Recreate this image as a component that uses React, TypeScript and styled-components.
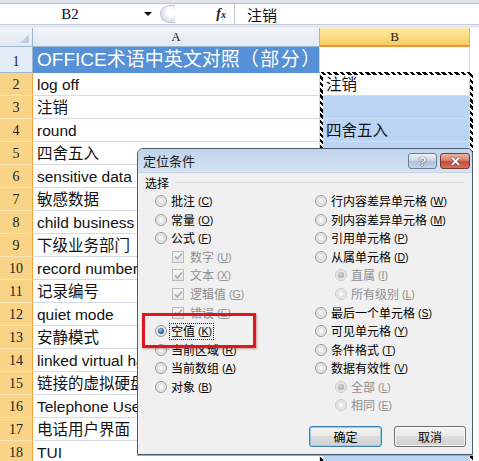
import React from "react";
import styled, { createGlobalStyle, css } from "styled-components";

const GlobalStyle = createGlobalStyle`
  html, body { margin: 0; padding: 0; background: #ffffff; }
  body { font-family: "Liberation Sans", "Noto Sans CJK SC", sans-serif; }
  #root { width: 479px; height: 461px; }
`;

const Page = styled.div`
  position: relative;
  width: 479px;
  height: 461px;
  overflow: hidden;
  background: #fff;
  display: flex;
  flex-direction: column;
`;

/* ---------- formula bar ---------- */
const FormulaBar = styled.div`
  flex: none;
  height: 28px;
  box-sizing: border-box;
  border-top: 3px solid #dfe4eb;
  padding-bottom: 3px;
  background: #e6ecf4;
  display: flex;
`;

const BarInner = styled.div`
  flex: 1;
  display: flex;
  align-items: center;
  background: #fff;
  border-top: 1px solid #b6c1cf;
  border-bottom: 1px solid #c3ccd8;
`;

const NameBox = styled.div`
  width: 158px;
  height: 100%;
  display: flex;
  align-items: center;
  font-family: "Liberation Serif", serif;
  font-size: 15px;
  color: #111;
`;

const NameText = styled.span`
  width: 140px;
  text-align: center;
`;

const DropArrow = styled.span`
  width: 0;
  height: 0;
  border-left: 4px solid transparent;
  border-right: 4px solid transparent;
  border-top: 4px solid #111;
  margin-left: 4px;
`;

const Grip = styled.div`
  width: 15px;
  height: 18px;
  margin-left: 2px;
  box-sizing: border-box;
  border-radius: 9px 0 0 9px;
  border: 1px solid #b9c5d3;
  border-right: none;
  background: radial-gradient(circle at 70% 40%, #ffffff 0 25%, #dfe6ee 60%, #c9d3df 100%);
`;

const Fx = styled.div`
  width: 60px;
  height: 100%;
  display: flex;
  align-items: center;
  justify-content: flex-end;
  padding-right: 8px;
  box-sizing: border-box;
  border-right: 1px solid #c3ccd8;
  font-family: "Liberation Serif", serif;
  font-style: italic;
  font-weight: bold;
  font-size: 14px;
  color: #222;
  sub { font-size: 10px; vertical-align: -1px; }
`;

const FormulaText = styled.div`
  padding-left: 12px;
  font-family: "Noto Sans CJK SC", sans-serif;
  font-size: 15px;
  color: #111;
`;

/* ---------- sheet ---------- */
const Sheet = styled.div`
  flex: 1;
  display: grid;
  grid-template-columns: 33px 287px 150px 9px;
  grid-template-rows: 19px 26px;
  grid-auto-rows: 23px;
`;

const Corner = styled.div`
  position: relative;
  box-sizing: border-box;
  background: linear-gradient(#f1f5fa, #e1e9f3);
  border-right: 1px solid #9eb6ce;
  border-bottom: 1px solid #9eb6ce;
  &::after {
    content: "";
    position: absolute;
    right: 3px;
    bottom: 3px;
    border-left: 9px solid transparent;
    border-bottom: 9px solid #c3cdd9;
  }
`;

const ColHead = styled.div<{ $sel?: boolean; $blank?: boolean }>`
  box-sizing: border-box;
  display: flex;
  align-items: center;
  justify-content: center;
  font-family: "Liberation Serif", serif;
  font-size: 13px;
  color: #222;
  border-right: 1px solid #9eb6ce;
  border-bottom: 1px solid #9eb6ce;
  background: linear-gradient(#f4f7fb, #e0e8f2);
  ${(p) =>
    p.$sel &&
    css`
      background: linear-gradient(#fdeaa6, #f7cd63);
      border-bottom: 2px solid #f29436;
      border-right: 1px solid #e2b35b;
    `}
  ${(p) =>
    p.$blank &&
    css`
      background: #fff;
      border-right: none;
      border-bottom: none;
    `}
`;

const RowHead = styled.div<{ $sel?: boolean }>`
  box-sizing: border-box;
  display: flex;
  align-items: flex-end;
  justify-content: center;
  padding-bottom: 1px;
  font-family: "Liberation Serif", serif;
  font-size: 14px;
  line-height: 18px;
  color: #222;
  background: ${(p) => (p.$sel ? "#f9d487" : "#e4ecf7")};
  border-bottom: 1px solid ${(p) => (p.$sel ? "#fbe6b6" : "#9eb6ce")};
  border-right: 1px solid ${(p) => (p.$sel ? "#efa33a" : "#9eb6ce")};
`;

const Cell = styled.div<{ $tone?: "title" | "range" | "active" }>`
  box-sizing: border-box;
  display: flex;
  align-items: flex-end;
  padding: 0 0 1px 4px;
  overflow: hidden;
  white-space: nowrap;
  font-family: "Liberation Sans", "Noto Sans CJK SC", sans-serif;
  font-size: 15.5px;
  line-height: 19px;
  color: #111;
  background: #fff;
  border-right: 1px solid #d4dbe6;
  border-bottom: 1px solid #d4dbe6;
  ${(p) =>
    p.$tone === "title" &&
    css`
      background: #5690d6;
      color: #fff;
      font-size: 19px;
      line-height: 24px;
      padding-bottom: 0;
      border-bottom-color: #5690d6;
    `}
  ${(p) =>
    p.$tone === "range" &&
    css`
      background: #bad5f4;
      border-bottom-color: #cfe0f6;
      padding-left: 6px;
    `}
  ${(p) =>
    p.$tone === "active" &&
    css`
      padding-left: 6px;
    `}
`;

const TitleText = styled.span`
  display: inline-block;
`;

const Paren = styled.span`
  letter-spacing: 1.5px;
`;

const Filler = styled.div`
  background: #fff;
`;

const Marquee = styled.div`
  position: absolute;
  left: 320px;
  top: 72px;
  width: 153px;
  height: 420px;
  box-sizing: border-box;
  border: 3px solid transparent;
  border-image: repeating-linear-gradient(45deg, #000 0 2.5px, #fff 2.5px 4.5px) 3;
  pointer-events: none;
`;

/* ---------- dialog ---------- */
const Dialog = styled.div`
  position: absolute;
  left: 137px;
  top: 148px;
  width: 336px;
  height: 307px;
  box-sizing: border-box;
  border: 1px solid #4e5d70;
  border-radius: 6px 6px 0 0;
  background: #f0f0f0;
  box-shadow: 0 1px 0 #7fb1db;
  display: flex;
  flex-direction: column;
  font-family: "Noto Sans CJK SC", "Liberation Sans", sans-serif;
  font-size: 12px;
  color: #000;
`;

const TitleBar = styled.div`
  flex: none;
  height: 24px;
  box-sizing: border-box;
  display: flex;
  align-items: flex-start;
  padding: 0 2px 0 5px;
  border-radius: 5px 5px 0 0;
  background: linear-gradient(#bfd3eb, #d6e3f2);
  border-bottom: 1px solid #c7d4e3;
`;

const Title = styled.span`
  font-size: 13px;
  line-height: 24px;
  color: #1b1b1b;
`;

const TitleButtons = styled.div`
  margin-left: auto;
  margin-top: 4px;
  display: flex;
  gap: 3px;
`;

const CapButton = styled.div<{ $close?: boolean }>`
  width: ${(p) => (p.$close ? 30 : 29)}px;
  height: 16px;
  box-sizing: border-box;
  border-radius: 3px;
  display: flex;
  align-items: center;
  justify-content: center;
  font-family: "Liberation Sans", sans-serif;
  font-weight: bold;
  font-size: 13px;
  color: #fff;
  border: 1px solid ${(p) => (p.$close ? "#7a3a31" : "#6b7f97")};
  background: ${(p) =>
    p.$close
      ? "linear-gradient(#eab3a6, #d9806c 45%, #c24c36 55%, #d0735f)"
      : "linear-gradient(#eef3f9, #c9d7e7 45%, #aec2da 55%, #c5d5e8)"};
  text-shadow: 0 0 1px #333, 0 0 1px #333;
`;

const Body = styled.div`
  flex: 1;
  position: relative;
  display: flex;
  flex-direction: column;
`;

const GroupHeader = styled.div`
  height: 19px;
  display: flex;
  align-items: center;
  padding-left: 7px;
  padding-right: 8px;
`;

const GroupRule = styled.div`
  flex: 1;
  height: 1px;
  margin-left: 6px;
  background: #d8dfe5;
`;

const Options = styled.div`
  display: grid;
  grid-template-columns: 160px 1fr;
  padding-left: 17px;
`;

const OptionColumn = styled.div`
  display: flex;
  flex-direction: column;
`;

const Option = styled.div<{ $indent?: number; $disabled?: boolean }>`
  height: 18.55px;
  display: flex;
  align-items: center;
  padding-left: ${(p) => p.$indent ?? 0}px;
  color: ${(p) => (p.$disabled ? "#8f8f8f" : "#000")};
  white-space: nowrap;
`;

const RadioDot = styled.span<{ $checked?: boolean; $disabled?: boolean }>`
  flex: none;
  width: 12px;
  height: 12px;
  box-sizing: border-box;
  border-radius: 50%;
  margin-right: 2px;
  border: 1px solid ${(p) => (p.$disabled ? "#c9c9c9" : "#989898")};
  background: radial-gradient(circle at 50% 50%, #f6f6f6 0 28%, #d9d9d9 45%, #ececec 62%, #dcdcdc 100%);
  display: flex;
  align-items: center;
  justify-content: center;
  &::after {
    content: "";
    width: 6px;
    height: 6px;
    border-radius: 50%;
    background: ${(p) =>
      !p.$checked
        ? "transparent"
        : p.$disabled
        ? "radial-gradient(circle at 40% 35%, #d6d6d6, #9c9c9c)"
        : "radial-gradient(circle at 40% 35%, #8cc3f0, #1e5690 70%, #163e68)"};
  }
`;

const CheckBox = styled.span<{ $disabled?: boolean }>`
  flex: none;
  width: 12px;
  height: 12px;
  box-sizing: border-box;
  margin-right: 4px;
  border: 1px solid ${(p) => (p.$disabled ? "#b9b9b9" : "#8e8f8f")};
  background: linear-gradient(#f6f6f6, #e6e6e6);
  display: flex;
  align-items: center;
  justify-content: center;
`;

const LabelText = styled.span<{ $focus?: boolean }>`
  display: inline-flex;
  align-items: center;
  height: 15px;
  line-height: 14px;
  padding: 0 1px;
  border: 1px dotted ${(p) => (p.$focus ? "#222" : "transparent")};
`;

const Acc = styled.span`
  margin-left: 3px;
  font-family: "Liberation Sans", sans-serif;
  font-size: 10.5px;
  line-height: 12px;
  u { text-decoration: underline; text-underline-offset: 1px; }
`;

const ButtonRow = styled.div`
  display: flex;
  justify-content: flex-end;
  gap: 12px;
  padding-right: 6px;
  margin-top: 11px;
`;

const PushButton = styled.div<{ $default?: boolean }>`
  width: ${(p) => (p.$default ? 73 : 72)}px;
  height: 21px;
  box-sizing: border-box;
  border-radius: 3px;
  display: flex;
  align-items: center;
  justify-content: center;
  font-size: 12px;
  color: #000;
  border: 1px solid ${(p) => (p.$default ? "#3c7fb1" : "#707070")};
  background: linear-gradient(#f2f2f2 0, #ebebeb 45%, #dddddd 50%, #cfcfcf 100%);
  box-shadow: ${(p) => (p.$default ? "inset 0 0 0 1px #8fd0f3" : "inset 0 0 0 1px #fbfbfb")};
`;

const RedFrame = styled.div`
  position: absolute;
  left: 4px;
  top: 140px;
  width: 114px;
  height: 35px;
  box-sizing: border-box;
  border: 3px solid #e2141d;
  box-shadow: 1px 1px 2px rgba(120, 0, 0, 0.35);
  pointer-events: none;
`;

/* ---------- data ---------- */
const rows: { a: string }[] = [
  { a: "log off" },
  { a: "注销" },
  { a: "round" },
  { a: "四舍五入" },
  { a: "sensitive data" },
  { a: "敏感数据" },
  { a: "child business unit" },
  { a: "下级业务部门" },
  { a: "record number" },
  { a: "记录编号" },
  { a: "quiet mode" },
  { a: "安静模式" },
  { a: "linked virtual hard disk" },
  { a: "链接的虚拟硬盘" },
  { a: "Telephone User Interface" },
  { a: "电话用户界面" },
  { a: "TUI" },
];

type Opt = {
  kind: "radio" | "check";
  label: string;
  acc: string;
  checked?: boolean;
  disabled?: boolean;
  indent?: number;
  focus?: boolean;
};

const leftOpts: Opt[] = [
  { kind: "radio", label: "批注", acc: "C" },
  { kind: "radio", label: "常量", acc: "O" },
  { kind: "radio", label: "公式", acc: "F" },
  { kind: "check", label: "数字", acc: "U", checked: true, disabled: true, indent: 17 },
  { kind: "check", label: "文本", acc: "X", checked: true, disabled: true, indent: 17 },
  { kind: "check", label: "逻辑值", acc: "G", checked: true, disabled: true, indent: 17 },
  { kind: "check", label: "错误", acc: "E", checked: true, disabled: true, indent: 17 },
  { kind: "radio", label: "空值", acc: "K", checked: true, focus: true },
  { kind: "radio", label: "当前区域", acc: "R" },
  { kind: "radio", label: "当前数组", acc: "A" },
  { kind: "radio", label: "对象", acc: "B" },
];

const rightOpts: Opt[] = [
  { kind: "radio", label: "行内容差异单元格", acc: "W" },
  { kind: "radio", label: "列内容差异单元格", acc: "M" },
  { kind: "radio", label: "引用单元格", acc: "P" },
  { kind: "radio", label: "从属单元格", acc: "D" },
  { kind: "radio", label: "直属", acc: "I", checked: true, disabled: true, indent: 20 },
  { kind: "radio", label: "所有级别", acc: "L", disabled: true, indent: 20 },
  { kind: "radio", label: "最后一个单元格", acc: "S" },
  { kind: "radio", label: "可见单元格", acc: "Y" },
  { kind: "radio", label: "条件格式", acc: "T" },
  { kind: "radio", label: "数据有效性", acc: "V" },
  { kind: "radio", label: "全部", acc: "L", checked: true, disabled: true, indent: 20 },
  { kind: "radio", label: "相同", acc: "E", disabled: true, indent: 20 },
];

const CheckMark = ({ color }: { color: string }) => (
  <svg width="9" height="9" viewBox="0 0 9 9">
    <path d="M1 4.6 L3.4 7 L8 1.4" fill="none" stroke={color} strokeWidth="1.5" />
  </svg>
);

const OptionItem = ({ o }: { o: Opt }) => (
  <Option $indent={o.indent} $disabled={o.disabled}>
    {o.kind === "radio" ? (
      <RadioDot $checked={o.checked} $disabled={o.disabled} />
    ) : (
      <CheckBox $disabled={o.disabled}>
        {o.checked && <CheckMark color={o.disabled ? "#a8a8a8" : "#222"} />}
      </CheckBox>
    )}
    <LabelText $focus={o.focus}>
      {o.label}
      <Acc>
        (<u>{o.acc}</u>)
      </Acc>
    </LabelText>
  </Option>
);

export default function App() {
  return (
    <>
      <GlobalStyle />
      <Page>
        <FormulaBar>
          <BarInner>
            <NameBox>
              <NameText>B2</NameText>
              <DropArrow />
            </NameBox>
            <Grip />
            <Fx>
              f<sub>x</sub>
            </Fx>
            <FormulaText>注销</FormulaText>
          </BarInner>
        </FormulaBar>

        <Sheet>
          <Corner />
          <ColHead>A</ColHead>
          <ColHead $sel>B</ColHead>
          <ColHead $blank />

          <RowHead>1</RowHead>
          <Cell $tone="title">
            <TitleText>
              OFFICE术语中英文对照<Paren>（部分</Paren>）
            </TitleText>
          </Cell>
          <Cell />
          <Filler />

          {rows.map((r, i) => {
            const n = i + 2;
            const tone = n === 2 ? "active" : "range";
            const bText = n === 2 ? "注销" : n === 4 ? "四舍五入" : "";
            return (
              <React.Fragment key={n}>
                <RowHead $sel>{n}</RowHead>
                <Cell>{r.a}</Cell>
                <Cell $tone={tone}>{bText}</Cell>
                <Filler />
              </React.Fragment>
            );
          })}
        </Sheet>

        <Marquee />

        <Dialog>
          <TitleBar>
            <Title>定位条件</Title>
            <TitleButtons>
              <CapButton>?</CapButton>
              <CapButton $close>✕</CapButton>
            </TitleButtons>
          </TitleBar>
          <Body>
            <GroupHeader>
              选择
              <GroupRule />
            </GroupHeader>
            <Options>
              <OptionColumn>
                {leftOpts.map((o) => (
                  <OptionItem key={o.label} o={o} />
                ))}
              </OptionColumn>
              <OptionColumn>
                {rightOpts.map((o) => (
                  <OptionItem key={o.label + o.acc} o={o} />
                ))}
              </OptionColumn>
            </Options>
            <ButtonRow>
              <PushButton $default>确定</PushButton>
              <PushButton>取消</PushButton>
            </ButtonRow>
            <RedFrame />
          </Body>
        </Dialog>
      </Page>
    </>
  );
}
